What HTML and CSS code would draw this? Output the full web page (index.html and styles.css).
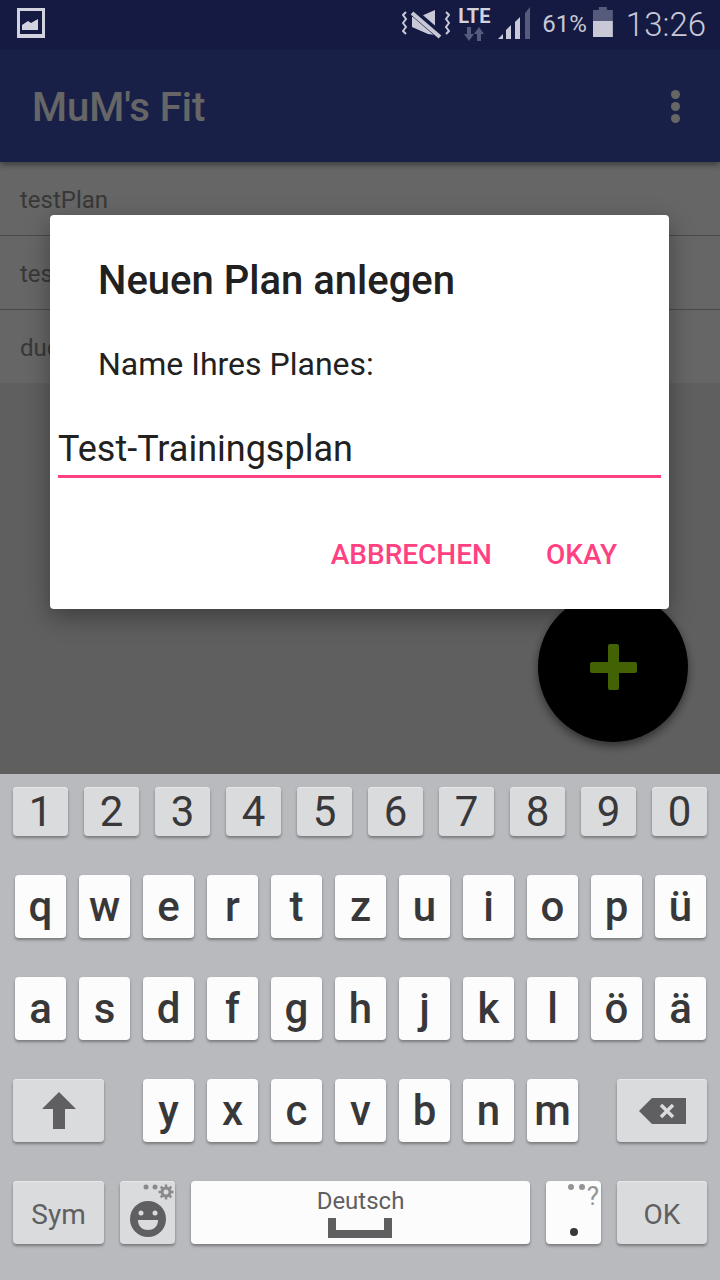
FILE: index.html
```html
<!DOCTYPE html>
<html lang="de">
<head>
    <meta charset="UTF-8">
    <meta name="viewport" content="width=device-width, initial-scale=1.0">
    <title>MuM's Fit</title>

    <link rel="stylesheet" href="styles.css">
</head>
<body>
    <div class="screen">
        <div class="statusBar">
            <svg class="pictureIcon" width="28" height="30" viewBox="0 0 28 30">
                <path d="M0 0H28V30H0ZM3 3V26H25V3Z" fill="#d3d3df" fill-rule="evenodd"/>
                <path d="M5 22V17L11 13L14 15L21 11V22Z" fill="#d3d3df"/>
            </svg>
            <svg class="muteIcon" width="48" height="30" viewBox="0 0 48 30">
                <path d="M10 7H17L33 0V25L26 24L10 17Z" fill="#c8c8d6"/>
                <path d="M10 1L39 26" stroke="#141a42" stroke-width="8"/>
                <path d="M10 3L38 27" stroke="#c8c8d6" stroke-width="4"/>
                <path d="M4 2L1 5L4 9L1 13L4 17L1 21L4 24M44 2L47 5L44 9L47 13L44 17L47 21L44 24" fill="none" stroke="#c8c8d6" stroke-width="2"/>
            </svg>
            <div class="network">
                <div class="lte">LTE</div>
                <svg width="22" height="14" viewBox="0 0 22 14">
                    <path d="M4 0H8V7H11L6 14L1 7H4ZM14 14H18V7H21L16 0L11 7H14Z" fill="#565b7c"/>
                </svg>
            </div>
            <svg class="signalIcon" width="34" height="32" viewBox="0 0 34 32">
                <path d="M0 32L5 27V32Z" fill="#c8c8d6"/>
                <path d="M8 32V23L13 18V32Z" fill="#c8c8d6"/>
                <path d="M17 32V15L22 10V32Z" fill="#c8c8d6"/>
                <path d="M27 32V6L32 0V32Z" fill="#565b7c"/>
            </svg>
            <span class="batteryText">61%</span>
            <div class="battery"></div>
            <span class="clock">13:26</span>
        </div>

        <div class="appBar">
            <h1 class="appTitle">MuM's Fit</h1>
            <div class="menuDots"><span></span><span></span><span></span></div>
        </div>

        <div class="planList">
            <div class="planRow">testPlan</div>
            <div class="planRow">test</div>
            <div class="planRow">dude</div>
        </div>

        <div class="fab">
            <div class="fabPlus"></div>
        </div>

        <div class="scrim"></div>

        <div class="dialog">
            <h2 class="dialogTitle">Neuen Plan anlegen</h2>
            <p class="dialogLabel">Name Ihres Planes:</p>
            <div class="dialogInput">Test-Trainingsplan</div>
            <div class="dialogButtons">
                <span class="dialogButton">ABBRECHEN</span>
                <span class="dialogButton">OKAY</span>
            </div>
        </div>
    </div>

    <div class="keyboard">
        <div class="keyRow">
            <div class="key numKey">1</div>
            <div class="key numKey">2</div>
            <div class="key numKey">3</div>
            <div class="key numKey">4</div>
            <div class="key numKey">5</div>
            <div class="key numKey">6</div>
            <div class="key numKey">7</div>
            <div class="key numKey">8</div>
            <div class="key numKey">9</div>
            <div class="key numKey">0</div>
        </div>
        <div class="keyRow letterRow">
            <div class="key">q</div>
            <div class="key">w</div>
            <div class="key">e</div>
            <div class="key">r</div>
            <div class="key">t</div>
            <div class="key">z</div>
            <div class="key">u</div>
            <div class="key">i</div>
            <div class="key">o</div>
            <div class="key">p</div>
            <div class="key">ü</div>
        </div>
        <div class="keyRow letterRow">
            <div class="key">a</div>
            <div class="key">s</div>
            <div class="key">d</div>
            <div class="key">f</div>
            <div class="key">g</div>
            <div class="key">h</div>
            <div class="key">j</div>
            <div class="key">k</div>
            <div class="key">l</div>
            <div class="key">ö</div>
            <div class="key">ä</div>
        </div>
        <div class="keyRow shiftRow">
            <div class="key grayKey wideKey">
                <svg width="34" height="37" viewBox="0 0 34 37">
                    <path d="M17 0L34 17H23V37H11V17H0Z" fill="#5f5f61"/>
                </svg>
            </div>
            <div class="shiftLetters">
                <div class="key">y</div>
                <div class="key">x</div>
                <div class="key">c</div>
                <div class="key">v</div>
                <div class="key">b</div>
                <div class="key">n</div>
                <div class="key">m</div>
            </div>
            <div class="key grayKey wideKey rightKey">
                <svg width="47" height="26" viewBox="0 0 47 26">
                    <path d="M0 13L13 0H47V26H13Z" fill="#5f5f61"/>
                    <path d="M22 7L34 19M34 7L22 19" stroke="#dadbdd" stroke-width="3.5"/>
                </svg>
            </div>
        </div>
        <div class="keyRow">
            <div class="key grayKey wideKey smallText">Sym</div>
            <div class="key grayKey emojiKey">
                <svg width="55" height="63" viewBox="0 0 55 63">
                    <circle cx="26" cy="6" r="2.500" fill="#8a8a8c"/>
                    <circle cx="35" cy="6" r="2.500" fill="#8a8a8c"/>
                    <circle cx="46" cy="11" r="5.500" fill="#8a8a8c"/>
                    <path d="M46 3.500V18.500M38.500 11H53.500M40.700 5.700L51.300 16.300M51.300 5.700L40.700 16.300" stroke="#8a8a8c" stroke-width="2.500"/>
                    <circle cx="46" cy="11" r="2.500" fill="#dadbdd"/>
                    <circle cx="28" cy="38" r="18" fill="#5f5f61"/>
                    <circle cx="21" cy="32" r="2.500" fill="#dadbdd"/>
                    <circle cx="35" cy="32" r="2.500" fill="#dadbdd"/>
                    <path d="M18 39H38C38 46 33 49 28 49C23 49 18 46 18 39Z" fill="#dadbdd"/>
                </svg>
            </div>
            <div class="key spaceKey">
                <span class="spaceLabel">Deutsch</span>
                <div class="spaceBar"></div>
            </div>
            <div class="key dotKey">
                <span class="dotHintDots"></span>
                <span class="dotHint">?</span>
                <span class="dotMark"></span>
            </div>
            <div class="key grayKey wideKey smallText rightKey">OK</div>
        </div>
    </div>
</body>
</html>
```

FILE: styles.css
```css
* {
    box-sizing: border-box;
}
body {
    margin: 0;
    width: 720px;
    height: 1280px;
    overflow: hidden;
    font-family: Roboto, "Liberation Sans", sans-serif;
}
.screen {
    position: relative;
    height: 774px;
    background-color: #eee;
    overflow: hidden;
}
.scrim {
    position: absolute;
    inset: 0;
    background-color: rgba(0, 0, 0, 0.6);
}

/* status bar sits above the scrim, its icons are not dimmed */
.statusBar {
    position: relative;
    z-index: 2;
    height: 50px;
    display: flex;
    align-items: center;
    padding: 0 14px 0 17px;
    background-color: #141a42;
    color: #c8c8d6;
}
.pictureIcon {
    margin: 0 auto 4px 0;
}
.muteIcon {
    margin-right: 7px;
}
.network {
    display: flex;
    flex-direction: column;
    align-items: center;
    margin-right: 7px;
    width: 34px;
}
.lte {
    margin: -2px 0 2px;
    font-size: 20px;
    font-weight: 700;
    line-height: 18px;
    color: #d3d3df;
}
.signalIcon {
    margin: 0 10px 4px 0;
}
.batteryText {
    font-size: 24px;
    margin: 0 6px 2px 0;
}
.battery {
    width: 20px;
    height: 30px;
    margin: 0 13px 6px 0;
    background: linear-gradient(#565b7c 47%, #c8c8d6 47%);
    clip-path: polygon(0 10%, 30% 10%, 30% 0, 70% 0, 70% 10%, 100% 10%, 100% 100%, 0 100%);
}
.clock {
    font-size: 33px;
    font-weight: 300;
    margin-bottom: 2px;
}

.appBar {
    height: 112px;
    display: flex;
    align-items: center;
    justify-content: space-between;
    padding: 0 40px 0 32px;
    background-color: #3f51b5;
    box-shadow: 0 3px 6px rgba(0, 0, 0, 0.4);
    position: relative;
}
.appTitle {
    margin: 3px 0 0;
    font-size: 40px;
    font-weight: 500;
    color: #fff;
}
.menuDots {
    display: flex;
    flex-direction: column;
    gap: 3px;
}
.menuDots span {
    width: 9px;
    height: 9px;
    border-radius: 50%;
    background-color: #fff;
}

.planRow {
    height: 74px;
    padding: 3px 20px 0;
    display: flex;
    align-items: center;
    font-size: 24px;
    color: #8c8c8c;
    background-color: #fff;
    border-bottom: 1px solid #b8b8b8;
}
.planRow:last-child {
    height: 73px;
    border-bottom: 0;
}

.fab {
    position: absolute;
    left: 538px;
    top: 592px;
    width: 150px;
    height: 150px;
    border-radius: 50%;
    background-color: #000;
    box-shadow: 0 4px 10px rgba(0, 0, 0, 0.5);
}
.fabPlus {
    position: absolute;
    left: 52px;
    top: 52px;
    width: 47px;
    height: 46px;
    filter: blur(0.6px);
}
.fabPlus::before,
.fabPlus::after {
    content: "";
    position: absolute;
    background-color: #a5f50a;
    border-radius: 2px;
}
.fabPlus::before {
    left: 0;
    top: 18px;
    width: 47px;
    height: 11px;
}
.fabPlus::after {
    left: 18px;
    top: 0;
    width: 11px;
    height: 46px;
}

.dialog {
    position: absolute;
    left: 50px;
    top: 215px;
    width: 619px;
    height: 394px;
    padding: 43px 8px 0;
    background-color: #fff;
    border-radius: 4px;
    box-shadow: 0 8px 24px rgba(0, 0, 0, 0.35);
}
.dialogTitle {
    margin: 0 0 0 40px;
    font-size: 40px;
    line-height: 46px;
    font-weight: 500;
    color: #212121;
}
.dialogLabel {
    margin: 40px 0 0 40px;
    font-size: 32px;
    line-height: 40px;
    color: #212121;
}
.dialogInput {
    margin-top: 49px;
    height: 45px;
    border-bottom: 3px solid #ff4081;
    font-size: 36px;
    line-height: 32px;
    color: #212121;
}
.dialogButtons {
    display: flex;
    justify-content: flex-end;
    gap: 54px;
    margin-top: 60px;
    padding-right: 44px;
}
.dialogButton {
    font-size: 28px;
    line-height: 34px;
    font-weight: 500;
    color: #ff4081;
}

.keyboard {
    height: 506px;
    padding-top: 13px;
    display: flex;
    flex-direction: column;
    gap: 39px;
    background-color: #b9babe;
}
.keyRow {
    display: flex;
    gap: 16px;
    padding: 0 13px;
}
.letterRow {
    gap: 13px;
    padding: 0 15px;
}
.shiftRow {
    justify-content: space-between;
}
.shiftLetters {
    display: flex;
    gap: 13px;
}
.key {
    flex: none;
    width: 51px;
    height: 63px;
    display: flex;
    align-items: center;
    justify-content: center;
    font-size: 42px;
    font-weight: 500;
    color: #38383a;
    background-color: #fcfcfc;
    border-radius: 4px;
    box-shadow: 0 2px 3px rgba(0, 0, 0, 0.35);
}
.numKey {
    width: 55px;
    height: 49px;
    font-weight: 400;
    background-color: #dadbdd;
    box-shadow: inset 0 1px 0 #e8e8ea, 0 2px 3px rgba(0, 0, 0, 0.35);
}
.grayKey {
    background-color: #dadbdd;
    box-shadow: inset 0 1px 0 #e8e8ea, 0 2px 3px rgba(0, 0, 0, 0.35);
}
.wideKey {
    width: 91px;
}
.rightKey {
    width: 90px;
}
.smallText {
    padding-top: 3px;
    font-size: 28px;
    font-weight: 400;
    color: #5f5f61;
}
.emojiKey {
    width: 55px;
}
.spaceKey {
    width: 339px;
    flex-direction: column;
    justify-content: flex-start;
}
.spaceLabel {
    font-size: 24px;
    font-weight: 400;
    line-height: 28px;
    margin-top: 6px;
    color: #5f5f61;
}
.spaceBar {
    width: 64px;
    height: 20px;
    margin: 3px 2px 0 0;
    border: 8px solid #5f5f61;
    border-top: 0;
}
.dotKey {
    position: relative;
    width: 55px;
}
.dotHintDots {
    position: absolute;
    left: 22px;
    top: 3px;
    width: 6px;
    height: 6px;
    border-radius: 50%;
    background-color: #949496;
    box-shadow: 11px 0 0 #949496;
}
.dotHint {
    position: absolute;
    top: 1px;
    right: 2px;
    font-size: 26px;
    font-weight: 400;
    line-height: 28px;
    color: #949496;
}
.dotMark {
    position: absolute;
    left: 24px;
    top: 47px;
    width: 8px;
    height: 8px;
    border-radius: 50%;
    background-color: #38383a;
}
```
